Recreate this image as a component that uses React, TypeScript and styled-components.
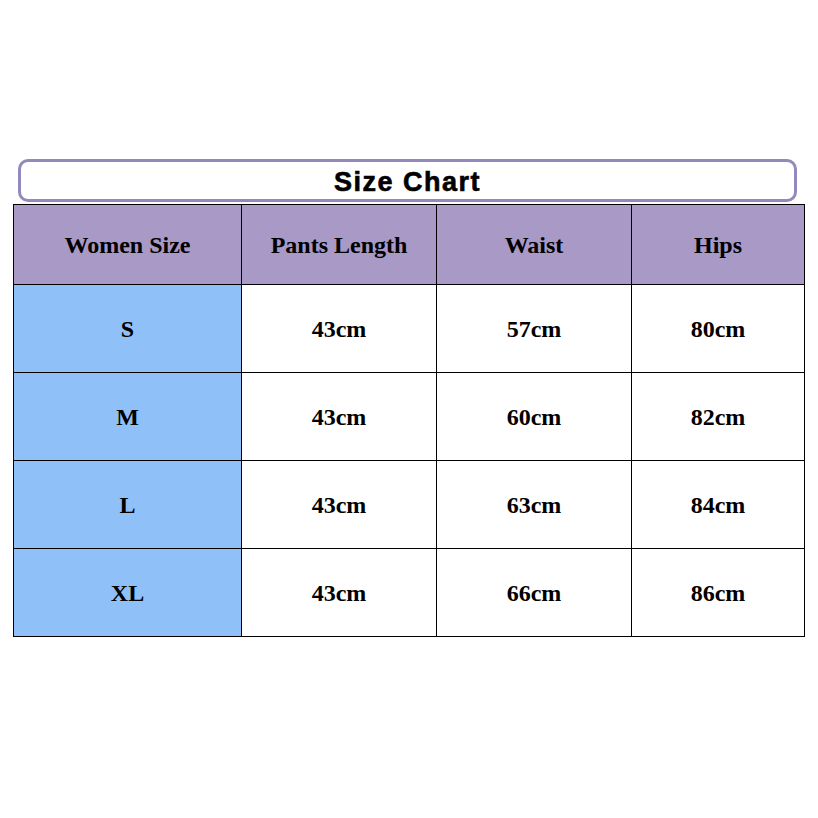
import React from 'react';
import styled, { createGlobalStyle } from 'styled-components';

const GlobalStyle = createGlobalStyle`
  html, body {
    margin: 0;
    padding: 0;
    background: #ffffff;
  }
`;

const Page = styled.div`
  width: 818px;
  height: 818px;
  box-sizing: border-box;
  padding: 159px 0 0 13px;
  display: flex;
  flex-direction: column;
  gap: 2px;
`;

const TitleBox = styled.div`
  margin-left: 5px;
  width: 779px;
  height: 43px;
  box-sizing: border-box;
  border: 3px solid #9389bd;
  border-radius: 10px;
  display: flex;
  align-items: center;
  justify-content: center;
  font-family: 'Liberation Sans', Arial, sans-serif;
  font-weight: bold;
  font-size: 27px;
  letter-spacing: 1.5px;
  -webkit-text-stroke: 0.6px #000;
  color: #000;
  padding-top: 3px;
`;

const Grid = styled.div`
  display: grid;
  grid-template-columns: 227px 194px 194px 172px;
  grid-template-rows: 79px 87px 87px 87px 87px;
  gap: 1px;
  padding: 1px;
  width: max-content;
  background: #000;
`;

const Cell = styled.div<{ $bg: string }>`
  background: ${(p) => p.$bg};
  display: flex;
  align-items: center;
  justify-content: center;
  padding-top: 2px;
  font-family: 'Liberation Serif', 'Times New Roman', serif;
  font-weight: bold;
  font-size: 24px;
  color: #000;
`;

const HEAD = '#a899c6';
const SIZE = '#90c0f8';
const BODY = '#ffffff';

const headers = ['Women Size', 'Pants Length', 'Waist', 'Hips'];
const rows = [
  ['S', '43cm', '57cm', '80cm'],
  ['M', '43cm', '60cm', '82cm'],
  ['L', '43cm', '63cm', '84cm'],
  ['XL', '43cm', '66cm', '86cm'],
];

export default function App() {
  return (
    <>
      <GlobalStyle />
      <Page>
        <TitleBox>Size Chart</TitleBox>
        <Grid>
          {headers.map((h) => (
            <Cell key={h} $bg={HEAD}>
              {h}
            </Cell>
          ))}
          {rows.map((r) =>
            r.map((v, i) => (
              <Cell key={r[0] + i} $bg={i === 0 ? SIZE : BODY}>
                {v}
              </Cell>
            ))
          )}
        </Grid>
      </Page>
    </>
  );
}
